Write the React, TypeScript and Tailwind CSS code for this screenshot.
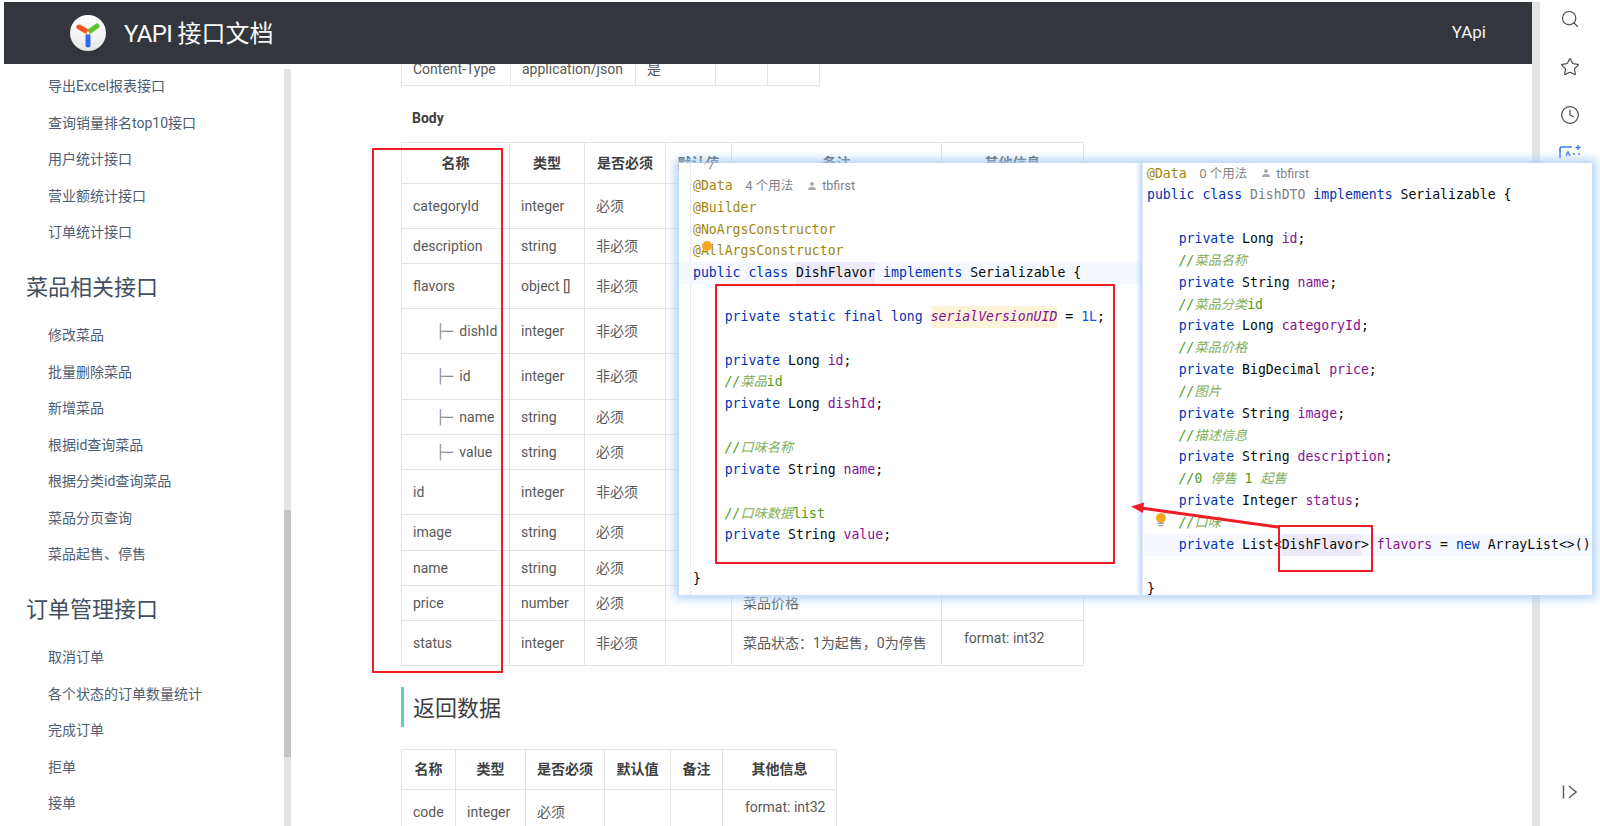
import { Search, Star, Clock } from "lucide-react";

const sans = "font-['Roboto','Noto_Sans_CJK_SC',sans-serif]";

type Tok = [string, string];
const kw = "text-[#0033b3]";
const ty = "text-[#080808]";
const fd = "text-[#871094]";
const an = "text-[#9e880d]";
const cmDark = "text-[#4f9a12]";
const cmSlash = "text-[#4f9a12] italic";
const cmCjk = "text-[#7fae5a] italic";
const gr = "text-[#808080]";
const nu = "text-[#1750eb]";
const hl = "text-[#871094] italic bg-[#fcf3d9] leading-[22px] inline-block";
const df = "bg-[#ede9f8] leading-[22px] inline-block text-[#080808]";

const ind = "    ";

function Hint({ text }: { text: string }) {
  return (
    <span className={`${sans} text-[12.5px] text-[#7f8389] inline-flex items-center align-baseline`}>
      <span className="ml-[13px]">{text}</span>
      <svg width="10" height="10" viewBox="0 0 10 10" className="ml-[14px] mr-[5px]">
        <circle cx="5" cy="3" r="2" fill="#a8abb0" />
        <path d="M1 9c0-2.500 2-3 4-3s4 .5 4 3z" fill="#a8abb0" />
      </svg>
      <span>tbfirst</span>
    </span>
  );
}

function Line({ toks, hint }: { toks: Tok[]; hint?: string }) {
  return (
    <div className="h-[21.85px] leading-[21.85px] whitespace-pre">
      {toks.map((t, i) => (
        <span key={i} className={t[1]}>
          {t[0]}
        </span>
      ))}
      {hint ? <Hint text={hint} /> : null}
    </div>
  );
}

const decl = (type: string, name: string): Tok[] => [
  [ind, ""],
  ["private ", kw],
  [type + " ", ty],
  [name, fd],
  [";", ty],
];

const c = (s: string): Tok => [s, cmCjk];
const l = (s: string): Tok => [s, cmDark];
const note = (...rest: Tok[]): Tok[] => [[ind, ""], ["//", cmSlash], ...rest];

const leftLines: { toks: Tok[]; active?: boolean; hint?: string }[] = [
  { toks: [[" */", "text-[#8c8c8c] italic"]] },
  { toks: [["@Data", an]], hint: "4 个用法" },
  { toks: [["@Builder", an]] },
  { toks: [["@NoArgsConstructor", an]] },
  { toks: [["@AllArgsConstructor", an]] },
  {
    toks: [
      ["public class ", kw],
      ["DishFlavor", df],
      [" implements ", kw],
      ["Serializable {", ty],
    ],
    active: true,
  },
  { toks: [[" ", ""]] },
  {
    toks: [
      [ind, ""],
      ["private static final long ", kw],
      ["serialVersionUID", hl],
      [" = ", ty],
      ["1L", nu],
      [";", ty],
    ],
  },
  { toks: [[" ", ""]] },
  { toks: decl("Long", "id") },
  { toks: note(c("菜品"), l("id")) },
  { toks: decl("Long", "dishId") },
  { toks: [[" ", ""]] },
  { toks: note(c("口味名称")) },
  { toks: decl("String", "name") },
  { toks: [[" ", ""]] },
  { toks: note(c("口味数据"), l("list")) },
  { toks: decl("String", "value") },
  { toks: [[" ", ""]] },
  { toks: [["}", ty]] },
];

const rightLines: { toks: Tok[]; active?: boolean; hint?: string }[] = [
  { toks: [["@Data", an]], hint: "0 个用法" },
  {
    toks: [
      ["public class ", kw],
      ["DishDTO", gr],
      [" implements ", kw],
      ["Serializable {", ty],
    ],
  },
  { toks: [[" ", ""]] },
  { toks: decl("Long", "id") },
  { toks: note(c("菜品名称")) },
  { toks: decl("String", "name") },
  { toks: note(c("菜品分类"), l("id")) },
  { toks: decl("Long", "categoryId") },
  { toks: note(c("菜品价格")) },
  { toks: decl("BigDecimal", "price") },
  { toks: note(c("图片")) },
  { toks: decl("String", "image") },
  { toks: note(c("描述信息")) },
  { toks: decl("String", "description") },
  { toks: note(l("0 "), c("停售 "), l("1 "), c("起售")) },
  { toks: decl("Integer", "status") },
  { toks: note(c("口味")) },
  {
    toks: [
      [ind, ""],
      ["private ", kw],
      ["List<", ty],
      ["DishFlavor", df],
      ["> ", ty],
      ["flavors", fd],
      [" = ", ty],
      ["new ", kw],
      ["ArrayList<>()", ty],
    ],
    active: true,
  },
  { toks: [[" ", ""]] },
  { toks: [["}", ty]] },
];

const cell = "border border-[#e3e3e3] px-[11px] font-normal text-left text-[14px] text-[#595959] whitespace-nowrap";
const head = "border border-[#e3e3e3] px-[6px] font-bold text-center text-[14px] text-[#404040] whitespace-nowrap";

const bodyRows: { h: string; n: string; tree?: boolean; t: string; r: string; note?: string; other?: string }[] = [
  { h: "h-[45px]", n: "categoryId", t: "integer", r: "必须" },
  { h: "h-[35px]", n: "description", t: "string", r: "非必须" },
  { h: "h-[45px]", n: "flavors", t: "object []", r: "非必须" },
  { h: "h-[45px]", n: "dishId", tree: true, t: "integer", r: "非必须" },
  { h: "h-[46px]", n: "id", tree: true, t: "integer", r: "非必须" },
  { h: "h-[35px]", n: "name", tree: true, t: "string", r: "必须" },
  { h: "h-[35px]", n: "value", tree: true, t: "string", r: "必须" },
  { h: "h-[45px]", n: "id", t: "integer", r: "非必须" },
  { h: "h-[36px]", n: "image", t: "string", r: "必须" },
  { h: "h-[35px]", n: "name", t: "string", r: "必须" },
  { h: "h-[35px]", n: "price", t: "number", r: "必须", note: "菜品价格" },
  { h: "h-[45px]", n: "status", t: "integer", r: "非必须", note: "菜品状态：1为起售，0为停售", other: "format: int32" },
];

const sideA = ["导出Excel报表接口", "查询销量排名top10接口", "用户统计接口", "营业额统计接口", "订单统计接口"];
const sideB = ["修改菜品", "批量删除菜品", "新增菜品", "根据id查询菜品", "根据分类id查询菜品", "菜品分页查询", "菜品起售、停售"];
const sideC = ["取消订单", "各个状态的订单数量统计", "完成订单", "拒单", "接单"];

function SideList({ items }: { items: string[] }) {
  return (
    <ul>
      {items.map((s) => (
        <li key={s} className="h-[36.45px] flex items-center pl-[44px] text-[14px] text-[#4e5d72] whitespace-nowrap">
          {s}
        </li>
      ))}
    </ul>
  );
}

function SideHead({ text }: { text: string }) {
  return <h3 className="h-[41px] mt-[16px] mb-[10px] flex items-center pl-[22px] text-[22px] font-normal text-[#41505f]">{text}</h3>;
}

function Logo() {
  return (
    <svg width="36" height="36" viewBox="0 0 36 36" className="shrink-0">
      <defs>
        <linearGradient id="lg" x1="0" y1="0" x2="0" y2="1">
          <stop offset="0" stopColor="#ffffff" />
          <stop offset="1" stopColor="#e8e8e8" />
        </linearGradient>
      </defs>
      <circle cx="18" cy="18" r="18" fill="url(#lg)" />
      <path d="M18 21v9" stroke="#2f6bf0" strokeWidth="5" strokeLinecap="round" />
      <path d="M9 12l7 4" stroke="#f4511e" strokeWidth="5" strokeLinecap="round" />
      <path d="M27 11l-7 5" stroke="#5cc22e" strokeWidth="5" strokeLinecap="round" />
      <circle cx="18" cy="18" r="1.800" fill="#fff" stroke="#f4811e" strokeWidth="0.8" />
    </svg>
  );
}

export default function App() {
  return (
    <div className={`relative w-[1600px] h-[826px] overflow-hidden bg-white flex ${sans}`}>
      {/* Page */}
      <div className="w-[1532px] h-full pt-[2px] pl-[4px] flex flex-col">
        <header className="relative z-10 h-[62px] shrink-0 bg-[#33363c] flex items-center pl-[66px] pr-[46px] text-white">
          <Logo />
          <span className="ml-[18px] mt-[1px] text-[24px] leading-none text-[#fafafa]">
            <span className="tracking-[-0.6px]">YAPI </span>接口文档
          </span>
          <span className="ml-auto text-[17px] text-[#f5f5f5]">YApi</span>
        </header>
        <div className="flex flex-1 min-h-0 overflow-hidden">
          {/* Sidebar */}
          <aside className="w-[280px] shrink-0 pt-[4.5px] overflow-hidden">
            <SideList items={sideA} />
            <SideHead text="菜品相关接口" />
            <SideList items={sideB} />
            <SideHead text="订单管理接口" />
            <SideList items={sideC} />
          </aside>
          <div className="w-[7px] shrink-0 mt-[5px] bg-[#e3e3e3] flex flex-col">
            <div className="h-[441px] shrink-0" />
            <div className="h-[247px] shrink-0 bg-[#c4c4c4]" />
          </div>
          {/* Content */}
          <main className="pl-[110px] flex-1 min-w-0">
            <table className="-mt-[11px] border-collapse table-fixed w-[417px]">
              <tbody>
                <tr className="h-[32px]">
                  <td className={`${cell} w-[109px]`}>Content-Type</td>
                  <td className={`${cell} w-[125px]`}>application/json</td>
                  <td className={`${cell} w-[80px]`}>是</td>
                  <td className={`${cell} w-[52px]`}></td>
                  <td className={`${cell} w-[52px]`}></td>
                </tr>
              </tbody>
            </table>
            <div className="mt-[22px] mb-[14px] h-[20px] pl-[11px] text-[14px] leading-[20px] font-bold text-[#404040]">Body</div>
            <table className="border-collapse table-fixed w-[682px]">
              <thead>
                <tr className="h-[41px]">
                  <th className={`${head} w-[108px]`}>名称</th>
                  <th className={`${head} w-[75px]`}>类型</th>
                  <th className={`${head} w-[81px]`}>是否必须</th>
                  <th className={`${head} w-[66px]`}>默认值</th>
                  <th className={`${head} w-[210px]`}>备注</th>
                  <th className={`${head} w-[142px]`}>其他信息</th>
                </tr>
              </thead>
              <tbody>
                {bodyRows.map((r, i) => (
                  <tr key={i} className={r.h}>
                    <td className={`${cell} ${r.tree ? "pl-[34px] pr-0" : ""}`}>
                      {r.tree ? <span className="font-['DejaVu_Sans_Mono',monospace] text-[#8c8c8c] mr-[3px]">├─</span> : null}
                      {r.tree ? " " : null}
                      {r.n}
                    </td>
                    <td className={cell}>{r.t}</td>
                    <td className={cell}>{r.r}</td>
                    <td className={cell}></td>
                    <td className={cell}>{r.note}</td>
                    <td className={`${cell} pl-[22px] pb-[10px]`}>{r.other}</td>
                  </tr>
                ))}
              </tbody>
            </table>
            <h2 className="mt-[21px] h-[40px] border-l-[3px] border-[#5fd3a0] pl-[9px] text-[22px] leading-[44px] font-normal text-[#404040]">返回数据</h2>
            <table className="mt-[22px] border-collapse table-fixed w-[435px]">
              <thead>
                <tr className="h-[40px]">
                  <th className={`${head} w-[54px]`}>名称</th>
                  <th className={`${head} w-[70px]`}>类型</th>
                  <th className={`${head} w-[79px]`}>是否必须</th>
                  <th className={`${head} w-[66px]`}>默认值</th>
                  <th className={`${head} w-[52px]`}>备注</th>
                  <th className={`${head} w-[114px]`}>其他信息</th>
                </tr>
              </thead>
              <tbody>
                <tr className="h-[45px]">
                  <td className={cell}>code</td>
                  <td className={cell}>integer</td>
                  <td className={cell}>必须</td>
                  <td className={cell}></td>
                  <td className={cell}></td>
                  <td className={`${cell} pl-[22px] pb-[10px]`}>format: int32</td>
                </tr>
              </tbody>
            </table>
          </main>
        </div>
      </div>

      {/* Page scrollbar */}
      <div className="w-[8px] h-full pt-[2px] shrink-0">
        <div className="h-full bg-[#e3e3e3]" />
      </div>

      {/* Right rail */}
      <div className="w-[60px] h-full shrink-0 flex flex-col items-center pt-[9px] text-[#44474c]">
        <Search size={20} strokeWidth={1.4} />
        <Star size={20} strokeWidth={1.4} className="mt-[28px]" />
        <Clock size={20} strokeWidth={1.4} className="mt-[28px]" />
        <svg width="24" height="20" viewBox="0 0 24 20" fill="none" className="mt-[19px]">
          <path d="M2 14V5a2 2 0 0 1 2-2h10" stroke="#3d7cf0" strokeWidth="1.6" />
          <path d="M20 1v5M17.500 3.500h5" stroke="#3d7cf0" strokeWidth="1.4" />
          <path d="M8 12l2-4 2 4" stroke="#3d7cf0" strokeWidth="1.6" />
          <circle cx="16" cy="10" r="1" fill="#3d7cf0" />
          <circle cx="21" cy="10" r="1" fill="#3d7cf0" />
        </svg>
        <svg width="16" height="14" viewBox="0 0 16 14" fill="none" className="mt-auto mb-[27px]" stroke="#5a5d62" strokeWidth="1.5">
          <path d="M1.500 0.500v13" />
          <path d="M7 1l7 6-7 6" />
        </svg>
      </div>

      {/* Pasted code screenshots */}
      <div className="absolute z-20 left-[679px] top-[163px] w-[913px] h-[432px] bg-white flex overflow-hidden shadow-[0_0_9px_4px_#b4d3f8] font-['DejaVu_Sans_Mono','Noto_Sans_CJK_SC',monospace] text-[13.17px]">
        <div className="relative w-[463px] shrink-0 overflow-hidden">
          <div className="absolute left-[11px] top-0 bottom-0 w-px bg-[#ebecf0]" />
          <div className="relative -mt-[10px]">
            {leftLines.map((ln, i) => (
              <div key={i} className={ln.active ? "bg-[#f5f8fe] pl-[14px]" : "pl-[14px]"}>
                <Line toks={ln.toks} hint={ln.hint} />
              </div>
            ))}
          </div>
        </div>
        <div className="relative flex-1 min-w-0 bg-white shadow-[0_0_5px_2px_#a9cdf7] border-l border-[#e6edf7]">
          <div className="overflow-hidden h-full -mt-[0.5px] pl-[4px]">
            {rightLines.map((ln, i) => (
              <div key={i} className={ln.active ? "bg-[#f5f8fe] -ml-[4px] pl-[4px]" : ""}>
                <Line toks={ln.toks} hint={ln.hint} />
              </div>
            ))}
          </div>
        </div>
      </div>

      {/* Annotations over the screenshots */}
      <div className="absolute z-30 left-[372px] top-[148px] w-[131px] h-[525px] border-2 border-[#ee1c25]" />
      <div className="absolute z-30 left-[715px] top-[284px] w-[400px] h-[280px] border-2 border-[#ee1c25]" />
      <div className="absolute z-30 left-[1278px] top-[525px] w-[95px] h-[47px] border-2 border-[#ee1c25]" />
      <div className="absolute z-30 left-[702px] top-[241px] w-[10px] h-[10px] rounded-full bg-[#f9a825]" />
      <svg className="absolute z-30 left-[1125px] top-[495px]" width="160" height="40" viewBox="0 0 160 40" fill="none">
        <path d="M153 32L16 13" stroke="#ee1c25" strokeWidth="3" />
        <path d="M6 11.500L19 7.500L18 18z" fill="#ee1c25" />
      </svg>
      <svg className="absolute z-30 left-[1155px] top-[512px]" width="12" height="16" viewBox="0 0 12 16">
        <circle cx="6" cy="6" r="5" fill="#f9a825" />
        <rect x="3" y="10.500" width="6" height="1.500" fill="#9a9a9a" />
        <rect x="3.500" y="13" width="5" height="1.200" fill="#9a9a9a" />
      </svg>
    </div>
  );
}
